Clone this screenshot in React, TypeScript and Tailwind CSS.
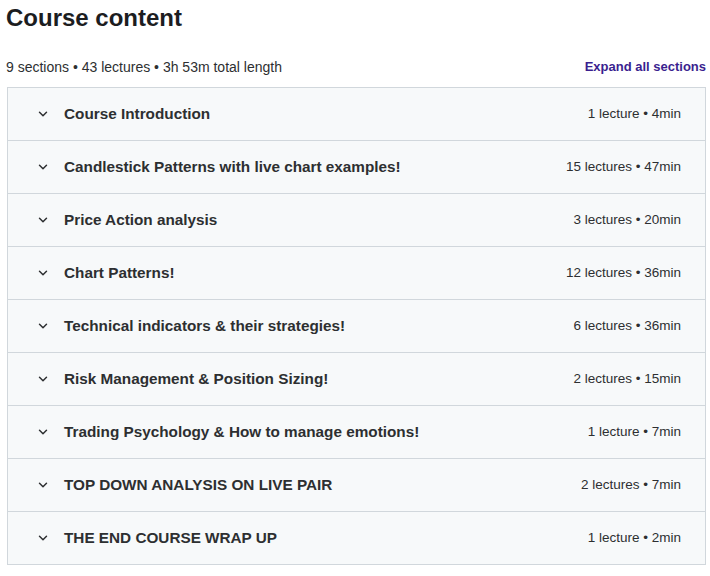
import React from 'react';
import { ChevronDown } from 'lucide-react';

const sections = [
  { title: 'Course Introduction', meta: '1 lecture • 4min' },
  { title: 'Candlestick Patterns with live chart examples!', meta: '15 lectures • 47min' },
  { title: 'Price Action analysis', meta: '3 lectures • 20min' },
  { title: 'Chart Patterns!', meta: '12 lectures • 36min' },
  { title: 'Technical indicators & their strategies!', meta: '6 lectures • 36min' },
  { title: 'Risk Management & Position Sizing!', meta: '2 lectures • 15min' },
  { title: 'Trading Psychology & How to manage emotions!', meta: '1 lecture • 7min' },
  { title: 'TOP DOWN ANALYSIS ON LIVE PAIR', meta: '2 lectures • 7min' },
  { title: 'THE END COURSE WRAP UP', meta: '1 lecture • 2min' },
];

export default function App() {
  return (
    <div className="w-[710px] h-[576px] bg-white text-[#2d2f31] font-['Liberation_Sans',Arial,sans-serif] pl-[6px] pr-[4px] overflow-hidden">
      <h2 className="text-[24px] font-bold leading-none pt-[6px] text-[#1c1d1f]">Course content</h2>

      <div className="flex items-center justify-between mt-[29px] mb-[12px]">
        <span className="text-[14px] leading-[16px] text-[#2d2f31]">9 sections • 43 lectures • 3h 53m total length</span>
        <button className="text-[13px] leading-[16px] font-bold text-[#3b1f8f]">Expand all sections</button>
      </div>

      <div className="ml-[1px] border border-[#d1d7dc] border-b-0">
        {sections.map((s) => (
          <div
            key={s.title}
            className="flex items-center h-[53px] bg-[#f7f9fa] border-b border-[#d1d7dc] pl-[28px] pr-[24px]"
          >
            <ChevronDown className="w-[14px] h-[14px] text-[#2d2f31]" strokeWidth={2.5} />
            <span className="ml-[14px] text-[15.3px] font-bold text-[#2d2f31] flex-1">{s.title}</span>
            <span className="text-[13.5px] text-[#2d2f31]">{s.meta}</span>
          </div>
        ))}
      </div>
    </div>
  );
}
